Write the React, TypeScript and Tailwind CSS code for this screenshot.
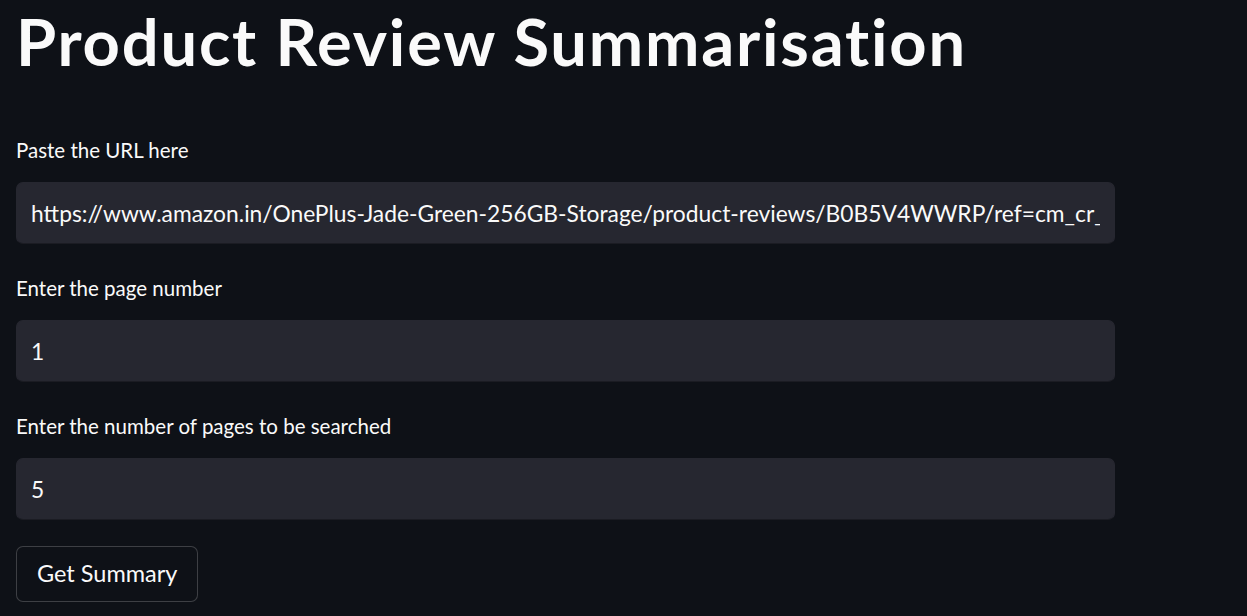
import { useState } from "react";

const font = { fontFamily: "Lato, 'Noto Sans', sans-serif" };

function Field({ label, value, onChange }: { label: string; value: string; onChange: (v: string) => void }) {
  return (
    <div className="flex flex-col">
      <label className="h-[24px] text-[20.5px] leading-[24px] text-[#fafafa]">{label}</label>
      <input
        value={value}
        onChange={(e) => onChange(e.target.value)}
        className="mt-[20px] h-[62px] w-full rounded-[7px] border border-[#262730] border-b-[#1b1c23] bg-[#262730] px-[14px] text-[22.8px] text-[#fafafa] outline-none"
        style={font}
      />
    </div>
  );
}

export default function App() {
  const [url, setUrl] = useState(
    "https://www.amazon.in/OnePlus-Jade-Green-256GB-Storage/product-reviews/B0B5V4WWRP/ref=cm_cr_dp_d_show_all_btm?ie=UTF8&reviewerType=all_reviews"
  );
  const [page, setPage] = useState("1");
  const [pages, setPages] = useState("5");

  return (
    <div className="min-h-screen bg-[#0e1117] text-[#fafafa]" style={font}>
      <div className="w-[1115px] pl-[16px]">
        <h1 className="pt-[1px] text-[65px] font-bold leading-[80px] tracking-[1.8px]">
          Product Review Summarisation
        </h1>
        <div className="mt-[57px] flex flex-col gap-[32px]">
          <Field label="Paste the URL here" value={url} onChange={setUrl} />
          <Field label="Enter the page number" value={page} onChange={setPage} />
          <Field label="Enter the number of pages to be searched" value={pages} onChange={setPages} />
        </div>
        <button className="mt-[26px] h-[56px] rounded-[7px] border border-[#fafafa33] bg-[#0e1117] px-[20px] text-[23.5px] text-[#fafafa]">
          Get Summary
        </button>
      </div>
    </div>
  );
}
